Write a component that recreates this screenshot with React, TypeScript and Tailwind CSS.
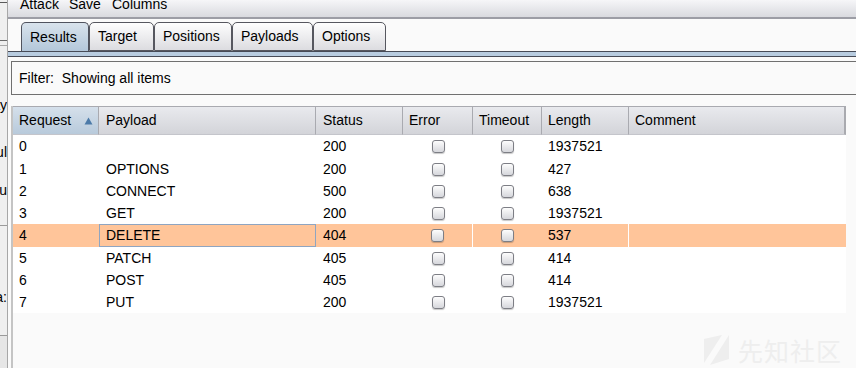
import React from "react";

const font = { fontFamily: '"Liberation Sans", Arial, sans-serif' };

type Col = { label: string; w: string; pl: string };
const cols: Col[] = [
  { label: "Request", w: "w-[86px]", pl: "pl-[6px]" },
  { label: "Payload", w: "w-[217px]", pl: "pl-[7px]" },
  { label: "Status", w: "w-[87px]", pl: "pl-[7px]" },
  { label: "Error", w: "w-[70px]", pl: "pl-[6px]" },
  { label: "Timeout", w: "w-[69px]", pl: "pl-[6px]" },
  { label: "Length", w: "w-[87px]", pl: "pl-[6px]" },
  { label: "Comment", w: "w-[217px]", pl: "pl-[6px]" },
];

const rows = [
  { c: ["0", "", "200", "1937521"], h: "h-[23px]" },
  { c: ["1", "OPTIONS", "200", "427"], h: "h-[22px]" },
  { c: ["2", "CONNECT", "500", "638"], h: "h-[22px]" },
  { c: ["3", "GET", "200", "1937521"], h: "h-[22px]" },
  { c: ["4", "DELETE", "404", "537"], h: "h-[23px]" },
  { c: ["5", "PATCH", "405", "414"], h: "h-[22px]" },
  { c: ["6", "POST", "405", "414"], h: "h-[22px]" },
  { c: ["7", "PUT", "200", "1937521"], h: "h-[22px]" },
];

function Checkbox() {
  return (
    <div className="w-[13px] h-[13px] rounded-[3px] border border-[#7d7e85] bg-linear-to-b from-[#fdfdfd] to-[#d6d7dc] shadow-[0_1px_1px_rgba(0,0,0,0.22)]" />
  );
}

const tabs = [
  { label: "Results", w: "w-[68px]", active: true },
  { label: "Target", w: "w-[65px]" },
  { label: "Positions", w: "w-[78px]" },
  { label: "Payloads", w: "w-[81px]" },
  { label: "Options", w: "w-[73px]" },
];

function LeftStrip() {
  return (
    <div className="w-[8px] h-full flex flex-col bg-[#efefef] border-r border-[#a7a7a7] overflow-hidden text-[14px] text-black shrink-0">
      <div className="h-[2px]" />
      <div className="h-[1px] bg-[#5a5a5a]" />
      <div className="h-[37px]" />
      <div className="h-[1px] bg-[#6a6a6a]" />
      <div className="h-[4px]" />
      <div className="h-[1px] bg-[#a9a9a9]" />
      <div className="h-[51px]" />
      <div className="h-[17px] flex justify-end whitespace-nowrap leading-[17px]">Pay</div>
      <div className="h-[30px]" />
      <div className="h-[17px] flex justify-end whitespace-nowrap leading-[17px]">Resul</div>
      <div className="h-[21px]" />
      <div className="h-[17px] flex justify-end whitespace-nowrap leading-[17px]">Stu</div>
      <div className="h-[26px]" />
      <div className="h-[1px] bg-[#9a9a9a]" />
      <div className="h-[63px]" />
      <div className="h-[17px] flex justify-end whitespace-nowrap leading-[17px]">Cha:</div>
      <div className="h-[29px]" />
      <div className="h-[1px] bg-[#9a9a9a]" />
      <div className="flex-1 bg-[#e6e6e6]" />
    </div>
  );
}

export default function App() {
  return (
    <div className="w-[856px] h-[368px] flex overflow-hidden bg-[#fafafa] text-black text-[14px]" style={font}>
      <LeftStrip />
      <div className="flex-1 flex flex-col min-w-0">
        {/* menu bar */}
        <div className="h-[19px] shrink-0 bg-linear-to-b from-[#f6f6f8] to-[#d9dadf] border-b-2 border-[#9c9da5] pl-[12px] flex items-start overflow-hidden">
          <div className="mt-[-4px] leading-[17px] flex whitespace-nowrap">
            <span className="w-[49px]">Attack</span>
            <span className="w-[43px]">Save</span>
            <span>Columns</span>
          </div>
        </div>
        {/* tabs */}
        <div className="h-[32px] shrink-0 flex items-end pl-[13px]">
          {tabs.map((t) =>
            t.active ? (
              <div
                key={t.label}
                className={`${t.w} h-[29px] shrink-0 rounded-t-[5px] border border-b-0 border-[#50535e] bg-linear-to-b from-[#d9e3ec] to-[#b3c7da] flex items-center pl-[8px]`}
              >
                {t.label}
              </div>
            ) : (
              <div
                key={t.label}
                className={`${t.w} h-[29px] shrink-0 rounded-t-[5px] border border-[#56575f] bg-linear-to-b from-[#fefefe] to-[#dcdce0] flex items-center pl-[8px]`}
              >
                {t.label}
              </div>
            )
          )}
        </div>
        {/* tab band */}
        <div className="h-[6px] shrink-0 border-t border-b border-[#474b57] bg-[#b8cce0]" />
        <div className="flex-1 flex flex-col pl-[3px] min-h-0">
          {/* filter */}
          <div className="mt-[4px] h-[34px] shrink-0 border-t border-b border-l border-[#707070] flex items-center pl-[7px] whitespace-pre">
            Filter:  Showing all items
          </div>
          {/* table */}
          <div className="mt-[11px] flex-1 border-l-2 border-[#c4c4c4] flex flex-col relative min-h-0">
            <div className="flex h-[29px] shrink-0">
              {cols.map((c, i) => (
                <div
                  key={c.label}
                  className={`${c.w} h-full shrink-0 border-t border-t-[#a9aab0] border-b border-b-[#c4c5cb] ${
                    i === cols.length - 1 ? "border-r-2 border-r-[#a9aaaf]" : "border-r border-r-[#a9aab0]"
                  } ${
                    i === 0 ? "bg-linear-to-b from-[#d5e0eb] to-[#b8cadb]" : "bg-linear-to-b from-[#e9eaee] to-[#d3d4d9]"
                  } ${c.pl} flex items-center justify-between`}
                >
                  <span>{c.label}</span>
                  {i === 0 && (
                    <svg width="9" height="8" viewBox="0 0 9 8" className="mr-[5px]">
                      <polygon points="4.5,0.5 8.5,7.5 0.5,7.5" fill="#4c7aa8" />
                    </svg>
                  )}
                </div>
              ))}
            </div>
            <div className="flex flex-col">
              {rows.map((row, ri) => {
                const r = row.c;
                const sel = ri === 4;
                return (
                  <div key={ri} className={`flex ${row.h} w-[833px] ${sel ? "bg-[#ffc59a]" : "bg-white"}`}>
                    <div className={`${cols[0].w} ${cols[0].pl} shrink-0 flex items-center`}>{r[0]}</div>
                    <div
                      className={`${cols[1].w} shrink-0 flex items-center ${
                        sel ? "border border-[#8fa5c1] pl-[6px]" : "pl-[7px]"
                      }`}
                    >
                      {r[1]}
                    </div>
                    <div className={`${cols[2].w} ${cols[2].pl} shrink-0 flex items-center`}>{r[2]}</div>
                    <div className={`${cols[3].w} shrink-0 flex items-center justify-center ${sel ? "border-r border-white" : ""}`}>
                      <Checkbox />
                    </div>
                    <div className={`${cols[4].w} shrink-0 flex items-center justify-center`}>
                      <Checkbox />
                    </div>
                    <div className={`${cols[5].w} ${cols[5].pl} shrink-0 flex items-center ${sel ? "border-r border-white" : ""}`}>
                      {r[3]}
                    </div>
                    <div className={`${cols[6].w} shrink-0`} />
                  </div>
                );
              })}
            </div>
            {/* watermark */}
            <div className="absolute right-[14px] bottom-[3px] flex items-center gap-[8px] text-[#eeeeee]">
              <svg width="26" height="30" viewBox="0 0 26 30">
                <polygon points="0,4 18,0 0,28" fill="#eeeeee" />
                <polygon points="25,0 25,24 6,30" fill="#eeeeee" />
              </svg>
              <span
                className="text-[25px] leading-[30px] tracking-[1px]"
                style={{ fontFamily: '"Noto Sans CJK SC", sans-serif' }}
              >
                先知社区
              </span>
            </div>
          </div>
        </div>
      </div>
    </div>
  );
}
